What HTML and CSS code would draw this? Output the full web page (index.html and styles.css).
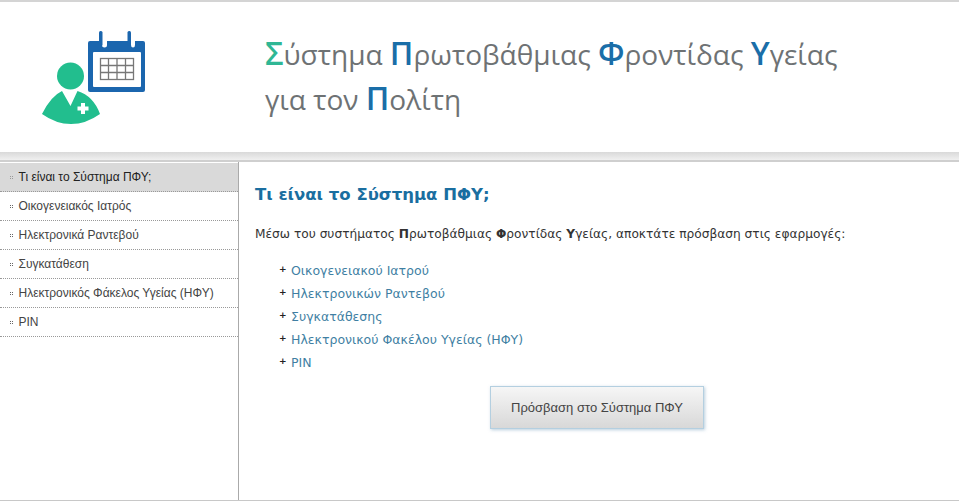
FILE: index.html
```html
<!DOCTYPE html>
<html lang="el">
<head>
    <meta charset="UTF-8">
    <meta name="viewport" content="width=device-width, initial-scale=1.0">
    <title>Σύστημα Πρωτοβάθμιας Φροντίδας Υγείας</title>
    <link rel="stylesheet" href="styles.css">
</head>
<body>
    <header class="header">
        <svg class="logo" width="120" height="100" viewBox="40 28 120 100">
            <!-- calendar -->
            <rect x="88" y="41" width="57" height="51" rx="2" fill="#1b66ae"/>
            <path d="M102 41v4q0 2.500 2.500 2.500t2.500-2.500v-4zM131 41v4q0 2.500 2 2.500t2-2.500v-4z" fill="#fff"/>
            <rect x="99" y="31" width="3.500" height="15" rx="1.500" fill="#1b66ae"/>
            <rect x="127.500" y="31" width="3.500" height="15" rx="1.500" fill="#1b66ae"/>
            <rect x="93" y="52" width="48" height="35" rx="1" fill="#fff"/>
            <g fill="none" stroke="#777" stroke-width="1.300">
                <rect x="100.500" y="58.500" width="33" height="21"/>
                <path d="M100.500 65.500h33M100.500 72.500h33M108.500 58.500v21M117 58.500v21M125.500 58.500v21"/>
            </g>
            <!-- person -->
            <circle cx="70.500" cy="76" r="13.500" fill="#22be8e"/>
            <path d="M62 91l8.500 15 7-15q16 5 22.500 23q-14 10-29 10q-15 0-29-10q9-18 20-23z" fill="#22be8e"/>
            <path d="M81 103h4v3.500h3.500v4H85v3.500h-4v-3.500h-3.500v-4H81z" fill="#fff"/>
        </svg>
        <h1 class="title">
            <span class="green">Σ</span>ύστημα <span class="blue">Π</span>ρωτοβάθμιας <span class="blue">Φ</span>ροντίδας <span class="blue">Υ</span>γείας<br>
            για τον <span class="blue">Π</span>ολίτη
        </h1>
    </header>
    <div class="band"></div>
    <div class="main">
        <nav class="sidebar">
            <a class="menu-item active" href="#">Τι είναι το Σύστημα ΠΦΥ;</a>
            <a class="menu-item" href="#">Οικογενειακός Ιατρός</a>
            <a class="menu-item" href="#">Ηλεκτρονικά Ραντεβού</a>
            <a class="menu-item" href="#">Συγκατάθεση</a>
            <a class="menu-item" href="#">Ηλεκτρονικός Φάκελος Υγείας (ΗΦΥ)</a>
            <a class="menu-item" href="#">PIN</a>
        </nav>
        <section class="content">
            <h2 class="heading">Τι είναι το Σύστημα ΠΦΥ;</h2>
            <p class="intro">Μέσω του συστήματος <b>Π</b>ρωτοβάθμιας <b>Φ</b>ροντίδας <b>Υ</b>γείας, αποκτάτε πρόσβαση στις εφαρμογές:</p>
            <ul class="apps">
                <li><a href="#">Οικογενειακού Ιατρού</a></li>
                <li><a href="#">Ηλεκτρονικών Ραντεβού</a></li>
                <li><a href="#">Συγκατάθεσης</a></li>
                <li><a href="#">Ηλεκτρονικού Φακέλου Υγείας (ΗΦΥ)</a></li>
                <li><a href="#">PIN</a></li>
            </ul>
            <div class="actions">
                <a class="access-button" href="#">Πρόσβαση στο Σύστημα ΠΦΥ</a>
            </div>
        </section>
    </div>
</body>
</html>
```

FILE: styles.css
```css
html, body {
    height: 100%;
}

body {
    display: flex;
    flex-direction: column;
    margin: 0;
    background-color: #fff;
    font-family: "DejaVu Sans", sans-serif;
    color: #333;
    box-sizing: border-box;
    border-top: 2px solid #d4d4d4;
    border-bottom: 1px solid #c8c8c8;
    overflow: hidden;
}

.header {
    display: flex;
    align-items: flex-start;
    height: 150px;
    flex-shrink: 0;
}

.logo {
    margin: 26px 0 0 40px;
}

.title {
    margin: 30px 0 0 105px;
    font-family: "Open Sans", sans-serif;
    font-size: 28px;
    font-weight: 400;
    line-height: 45px;
    color: #6e7274;
    white-space: nowrap;
}

.green {
    color: #2fb795;
    font-size: 32px;
    font-weight: 600;
    line-height: 1;
}

.blue {
    color: #1a6ea8;
    font-size: 32px;
    font-weight: 600;
    line-height: 1;
}

.band {
    height: 8px;
    flex-shrink: 0;
    background: linear-gradient(#d9d9d9, #f0f0f0);
    border-bottom: 2px solid #cfcfcf;
}

.main {
    display: flex;
    flex: 1;
}

.sidebar {
    width: 238px;
    flex-shrink: 0;
    border-right: 1px solid #aaa;
    padding-top: 1px;
}

.menu-item {
    display: block;
    height: 28px;
    line-height: 28px;
    font-family: "Liberation Sans", Arial, sans-serif;
    font-size: 12px;
    color: #444;
    text-decoration: none;
    border-bottom: 1px dotted #999;
}

/* four little dots in front of each item */
.menu-item::before {
    content: "";
    display: inline-block;
    width: 1px;
    height: 1px;
    margin: 0 7.500px 2px 10px;
    vertical-align: middle;
    background-color: #666;
    box-shadow: 2px 0 #666, 0 2px #666, 2px 2px #666;
}

.menu-item.active {
    background-color: #d9d9d9;
    color: #222;
}

.menu-item.active::before {
    background-color: #999;
    box-shadow: 2px 0 #999, 0 2px #999, 2px 2px #999;
}

.content {
    flex: 1;
    padding-left: 16px;
}

.heading {
    margin: 22px 0 0;
    font-size: 16.500px;
    font-weight: 700;
    line-height: 22px;
    color: #1a6ea0;
}

.intro {
    margin: 19px 0 0;
    font-size: 12.200px;
    line-height: 18px;
    color: #333;
}

.apps {
    list-style: none;
    margin: 16px 0 0;
    padding: 0 0 0 36px;
}

.apps li {
    position: relative;
    height: 23px;
    line-height: 23px;
    font-size: 12.500px;
}

.apps li::before {
    content: "+";
    position: absolute;
    left: -12px;
    top: -1px;
    font-size: 9px;
    font-weight: 700;
    color: #222;
}

.apps a {
    color: #3f7fa3;
    text-decoration: none;
}

.actions {
    display: flex;
    justify-content: center;
    width: 684px;
    margin-top: 12px;
}

.access-button {
    display: block;
    width: 212px;
    height: 41px;
    line-height: 41px;
    text-align: center;
    font-family: "Liberation Sans", Arial, sans-serif;
    font-size: 13px;
    color: #444;
    text-decoration: none;
    border: 1px solid #b4cfe0;
    background: linear-gradient(#f6f6f6, #d8d8d8);
    box-shadow: 1px 1px 3px rgba(120, 160, 190, 0.5);
}
```
